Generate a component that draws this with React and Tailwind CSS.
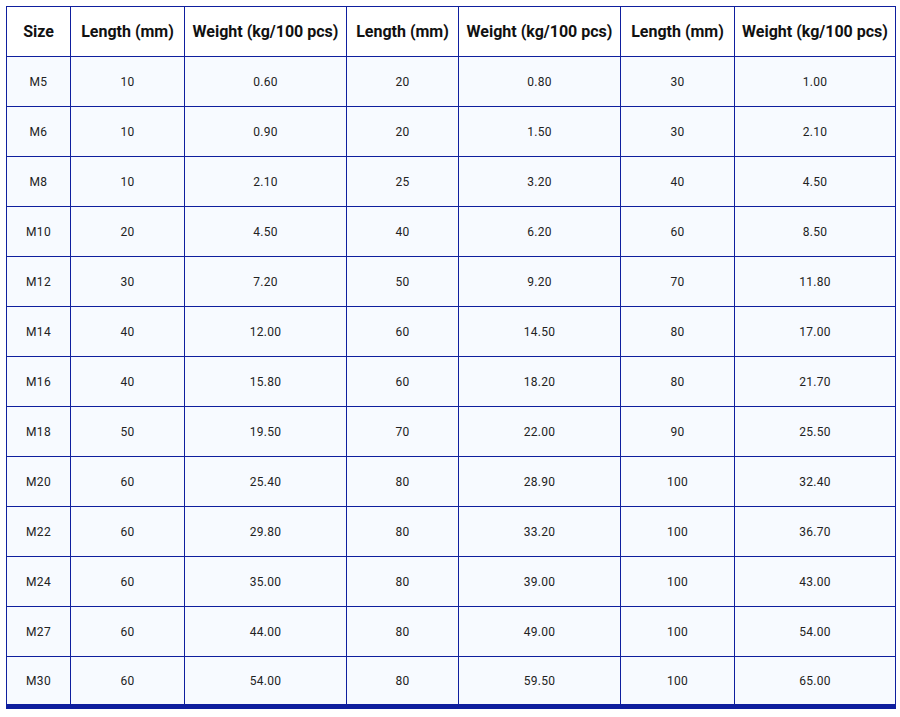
import React from 'react';

const rows = [
  ['M5', '10', '0.60', '20', '0.80', '30', '1.00'],
  ['M6', '10', '0.90', '20', '1.50', '30', '2.10'],
  ['M8', '10', '2.10', '25', '3.20', '40', '4.50'],
  ['M10', '20', '4.50', '40', '6.20', '60', '8.50'],
  ['M12', '30', '7.20', '50', '9.20', '70', '11.80'],
  ['M14', '40', '12.00', '60', '14.50', '80', '17.00'],
  ['M16', '40', '15.80', '60', '18.20', '80', '21.70'],
  ['M18', '50', '19.50', '70', '22.00', '90', '25.50'],
  ['M20', '60', '25.40', '80', '28.90', '100', '32.40'],
  ['M22', '60', '29.80', '80', '33.20', '100', '36.70'],
  ['M24', '60', '35.00', '80', '39.00', '100', '43.00'],
  ['M27', '60', '44.00', '80', '49.00', '100', '54.00'],
  ['M30', '60', '54.00', '80', '59.50', '100', '65.00'],
];

const headers = [
  'Size',
  'Length (mm)',
  'Weight (kg/100 pcs)',
  'Length (mm)',
  'Weight (kg/100 pcs)',
  'Length (mm)',
  'Weight (kg/100 pcs)',
];

// column widths, border to border
const widths = [64, 114, 162, 112, 162, 114, 161];

export default function App() {
  return (
    <div className="min-h-screen bg-white pl-[6px] pt-[6px] font-['Roboto',sans-serif]">
      <table className="w-[890px] table-fixed border-collapse border-b-[5px] border-b-[#0f1f9e]">
        <colgroup>
          {widths.map((w, i) => (
            <col key={i} style={{ width: w }} />
          ))}
        </colgroup>
        <thead>
          <tr className="h-[50px] bg-white">
            {headers.map((h, i) => (
              <th
                key={i}
                className="border border-[#0f1f9e] p-0 text-center text-[16px] font-bold text-[#111]"
              >
                {h}
              </th>
            ))}
          </tr>
        </thead>
        <tbody>
          {rows.map((r, i) => (
            <tr key={i} className="h-[50px] bg-[#f7faff]">
              {r.map((c, j) => (
                <td
                  key={j}
                  className="border border-[#0f1f9e] p-0 pt-px text-center text-[12px] tracking-[0.3px] text-[#222]"
                >
                  {c}
                </td>
              ))}
            </tr>
          ))}
        </tbody>
      </table>
    </div>
  );
}
